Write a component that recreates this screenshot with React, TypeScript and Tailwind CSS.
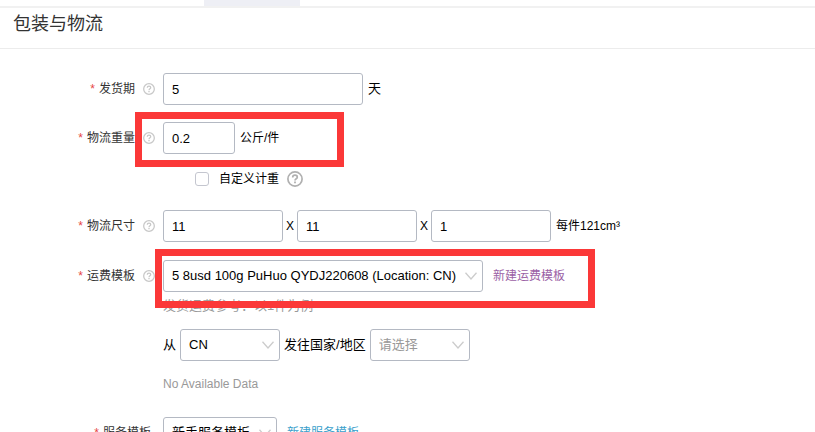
import type { ReactNode, SelectHTMLAttributes } from "react";
import { clsx } from "clsx";

function HelpIcon({ className }: { className?: string }) {
  return (
    <svg
      viewBox="0 0 16 16"
      fill="none"
      stroke="currentColor"
      className={clsx("shrink-0", className)}
      aria-hidden="true"
    >
      <circle cx="8" cy="8" r="7.1" strokeWidth="1.7" />
      <path
        d="M5.7 6.4C5.7 5 6.7 4.2 8 4.2s2.3.8 2.3 2c0 1.5-2.3 1.6-2.3 3.3"
        strokeWidth="1.7"
      />
      <path d="M8 10.6v1.7" strokeWidth="1.8" />
    </svg>
  );
}

interface FieldRowProps {
  label: string;
  htmlFor: string;
  help?: boolean;
  className?: string;
  children: ReactNode;
}

function FieldRow({ label, htmlFor, help = true, className, children }: FieldRowProps) {
  return (
    <div className={clsx("flex items-center", className)}>
      <div
        className={clsx(
          "flex w-[163px] shrink-0 items-center justify-end gap-2 text-xs text-[#333]",
          help ? "pr-2" : "pr-3",
        )}
      >
        <label htmlFor={htmlFor} className="flex gap-1">
          <span className="text-[#e64545]">*</span>
          {label}
        </label>
        {help && <HelpIcon className="size-3 text-[#c8c8c8]" />}
      </div>
      {children}
    </div>
  );
}

const control = "h-8 rounded-[3px] border border-[#b4b9c3] bg-white text-[13px] text-black outline-none";

function TextBox({ id, value, label, className }: { id?: string; value: string; label?: string; className?: string }) {
  return (
    <input
      id={id}
      type="text"
      defaultValue={value}
      aria-label={label}
      className={clsx(control, "px-2", className)}
    />
  );
}

interface SelectBoxProps extends SelectHTMLAttributes<HTMLSelectElement> {
  option: string;
  muted?: boolean;
  width: string;
}

function SelectBox({ option, muted = false, width, ...rest }: SelectBoxProps) {
  return (
    <div className={clsx("relative", width)}>
      <select
        {...rest}
        className={clsx(control, "block w-full appearance-none pl-2", muted && "text-[#999]!")}
      >
        <option>{option}</option>
      </select>
      <svg
        viewBox="0 0 12 8"
        fill="none"
        stroke="#ccc"
        strokeWidth="1.3"
        className="pointer-events-none absolute top-3 right-[6px] h-2 w-3"
        aria-hidden="true"
      >
        <path d="M.5.8 6 7 11.5.8" />
      </svg>
    </div>
  );
}

// Red frame laid over a row to call it out
function Highlight({ className }: { className: string }) {
  return (
    <div className={clsx("pointer-events-none absolute z-10 border-7 border-[#fb3838]", className)} />
  );
}

export default function App() {
  return (
    <main className="h-screen overflow-hidden bg-white font-['Liberation_Sans','Noto_Sans_CJK_SC',sans-serif] text-[13px] text-black">
      <div className="border-b-2 border-[#f1f1f1]">
        <div className="ml-[204px] h-[6px] w-24 bg-[#eeeff5]" />
      </div>
      <header className="flex h-[41px] items-center border-b border-[#ececec] px-[13px] pb-2">
        <h2 className="text-lg leading-6 text-[#333]">包装与物流</h2>
      </header>

      <form className="pt-6 leading-4">
        <FieldRow label="发货期" htmlFor="lead-time">
          <TextBox id="lead-time" value="5" className="w-[200px]" />
          <span className="ml-[5px]">天</span>
        </FieldRow>

        <div className="relative mt-[17px]">
          <FieldRow label="物流重量" htmlFor="weight">
            <TextBox id="weight" value="0.2" className="w-[72px]" />
            <span className="ml-[5px] text-xs">公斤/件</span>
          </FieldRow>
          <Highlight className="-top-[10px] left-[135px] h-[55px] w-[209px]" />
        </div>

        <div className="mt-[17px] flex h-4 items-center pl-[195px] text-xs">
          <label className="flex items-center gap-[10px]">
            <input
              type="checkbox"
              className="size-[14px] appearance-none rounded-[3px] border border-[#c4c6cf] bg-white"
            />
            自定义计重
          </label>
          <HelpIcon className="ml-2 size-4 text-[#b0b0b0]" />
        </div>

        <FieldRow label="物流尺寸" htmlFor="length" className="mt-[23px]">
          <TextBox id="length" value="11" className="w-[120px]" />
          <span className="w-[14px] text-center text-xs">X</span>
          <TextBox value="11" label="宽" className="w-[120px]" />
          <span className="w-[14px] text-center text-xs">X</span>
          <TextBox value="1" label="高" className="w-[120px]" />
          <span className="ml-[5px] text-xs">每件121cm³</span>
        </FieldRow>

        <div className="relative mt-[18px]">
          <FieldRow label="运费模板" htmlFor="freight-template">
            <SelectBox
              id="freight-template"
              option="5 8usd 100g PuHuo QYDJ220608 (Location: CN)"
              width="w-[320px]"
            />
            <a href="#new-freight" className="ml-[10px] text-xs text-[#9b5fa5]">
              新建运费模板
            </a>
          </FieldRow>
          <Highlight className="-top-[11px] left-[155px] h-[59px] w-[440px]" />
        </div>

        <div className="pl-[163px]">
          <p className="mt-[6px] text-[#999]">发货运费参考：以1件为例</p>
          <div className="mt-[15px] flex items-center">
            <label htmlFor="ship-from" className="mr-1">
              从
            </label>
            <SelectBox id="ship-from" option="CN" width="w-[100px]" />
            <label htmlFor="ship-to" className="mx-1 whitespace-nowrap">
              发往国家/地区
            </label>
            <SelectBox id="ship-to" option="请选择" width="w-[100px]" muted />
          </div>
          <p className="mt-[15px] text-xs text-[#999]">No Available Data</p>
        </div>

        <FieldRow label="服务模板" htmlFor="service-template" help={false} className="mt-[25px]">
          <SelectBox id="service-template" option="新手服务模板" width="w-[114px]" />
          <a href="#new-service" className="ml-[10px] text-xs text-[#3a9fcb]">
            新建服务模板
          </a>
        </FieldRow>
      </form>
    </main>
  );
}
